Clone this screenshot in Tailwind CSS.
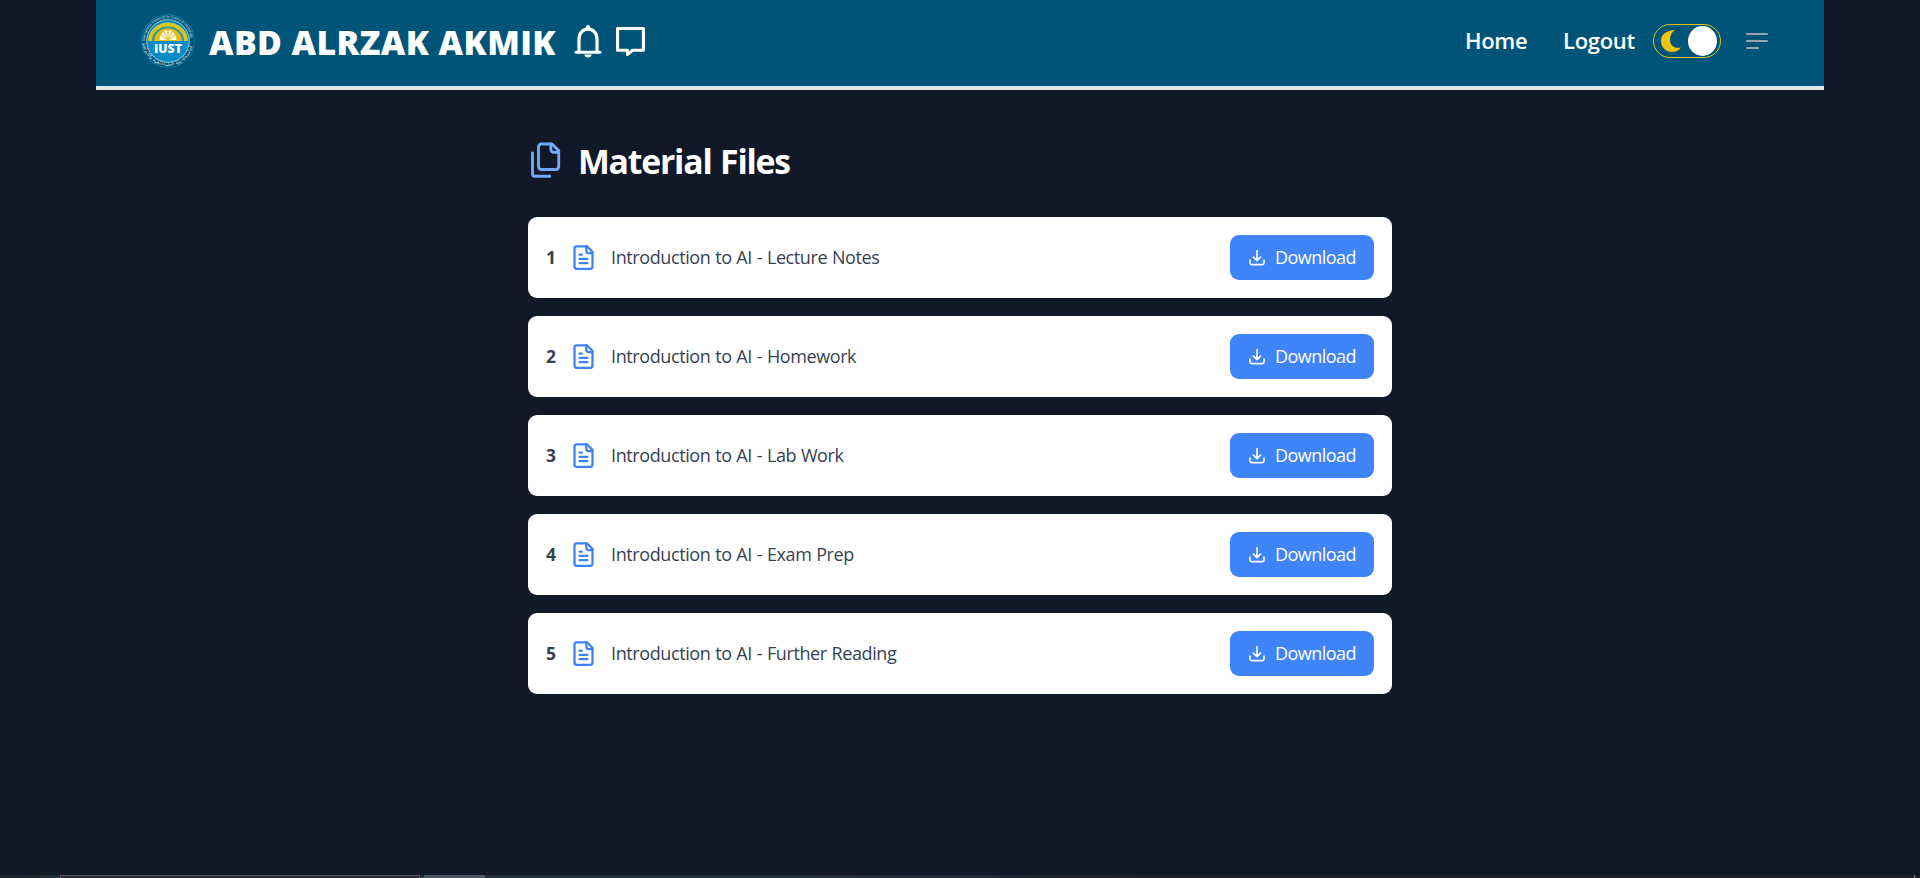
<!DOCTYPE html>
<html lang="en">
<head>
<meta charset="utf-8">
<title>Material Files</title>
<script src="https://cdn.jsdelivr.net/npm/@tailwindcss/browser@4"></script>
</head>
<body class="h-[878px] overflow-hidden bg-[#111827] font-['Open_Sans','Noto_Sans',sans-serif] flex flex-col">
<svg class="hidden">
  <symbol id="doc" viewBox="0 0 24 24" fill="none" stroke="currentColor" stroke-width="2" stroke-linecap="round" stroke-linejoin="round"><path d="M15 2H6a2 2 0 0 0-2 2v16a2 2 0 0 0 2 2h12a2 2 0 0 0 2-2V7Z"/><path d="M14.500 2v4a2 2 0 0 0 2 2h3.500"/><path d="M10.500 9.500H8.500M15.500 13.200H8.500M15.500 17H8.500"/></symbol>
  <symbol id="down" viewBox="0 0 24 24" fill="none" stroke="currentColor" stroke-width="2.400" stroke-linecap="round" stroke-linejoin="round"><path d="M12 1v15M6.500 10.500 12 16l5.500-5.500M1.500 15v4.500a2.500 2.500 0 0 0 2.500 2.500h16a2.500 2.500 0 0 0 2.500-2.500V15"/></symbol>
</svg>
<header class="mx-24 h-[90px] shrink-0 border-b-4 border-[#e5e7eb] bg-[#005478] text-white flex items-center pl-[45px] pr-[56px] pb-1">
  <svg class="w-[54px] h-[54px] shrink-0" viewBox="0 0 54 54">
    <defs>
      <path id="ringTop" d="M4.200 27a22.800 22.800 0 0 1 45.600 0"/>
      <path id="ringBottom" d="M2.200 29a24.900 24.900 0 0 0 49.600 0"/>
    </defs>
    <circle cx="27" cy="27" r="26.400" fill="#005478" stroke="#0878a8" stroke-width="1"/>
    <circle cx="27" cy="27" r="21.300" fill="#0a8bc8" stroke="#b9dbe8" stroke-width=".8"/>
    <path d="M7 27a20 18.500 0 0 1 40 0z" fill="#d9c51c"/>
    <path d="M11 27a16 14.500 0 0 1 32 0z" fill="#2492a8"/>
    <path d="M13 27a14 12.800 0 0 1 28 0z" fill="#e0bd18"/>
    <path d="M18.500 26a8.500 10 0 0 1 17 0z" fill="#fffbe0"/>
    <path d="M27 26V15.500M27 26l-4.500-9M27 26l4.500-9M27 26l-8-5.500M27 26l8-5.500" stroke="#e0bd18" stroke-width="1"/>
    <text class="font-['Open_Sans']" font-size="4.200" font-weight="600" fill="#a9cbd8"><textPath href="#ringTop" textLength="68" lengthAdjust="spacingAndGlyphs">International University for Science &amp; Technology</textPath></text>
    <text class="font-['Noto_Sans']" font-size="4" font-weight="600" fill="#a9cbd8"><textPath href="#ringBottom" textLength="70">الجامعة الدولية الخاصة للعلوم والتكنولوجيا</textPath></text>
    <text x="27" y="39" text-anchor="middle" textLength="28" lengthAdjust="spacingAndGlyphs" class="font-['Open_Sans']" font-size="12.800" font-weight="800" fill="#fff">IUST</text>
  </svg>
  <h1 class="ml-[14px] w-[348px] whitespace-nowrap text-[33.750px] leading-[45px] font-extrabold tracking-[0.430px] pt-[3px]">ABD ALRZAK AKMIK</h1>
  <svg class="ml-[17px] w-[28px] h-[34px]" viewBox="0 0 28 34" fill="none" stroke="#fff"><path d="M2 28.200h24" stroke-width="3" stroke-linecap="round"/><path d="M5 28V15.500C5 9 9 5.200 14 5.200S23 9 23 15.500V28" stroke-width="3.200"/><path d="M14 3.300v1" stroke-width="4.400" stroke-linecap="round"/><path d="M10.500 30.500h7a3.500 3 0 0 1-7 0z" fill="#fff" stroke="none"/></svg>
  <svg class="ml-[14px] w-[29px] h-[29px]" viewBox="0 0 28 28" fill="none" stroke="#fff" stroke-width="3" stroke-linejoin="round"><path d="M1.500 1.500h25v21H16l-5 4v-4H1.500z"/></svg>
  <nav class="ml-auto flex items-center text-[22px] font-semibold leading-[30px]">
    <a class="w-[61px] mr-[37px] pb-[2px] -ml-px whitespace-nowrap tracking-[-0.300px]">Home</a>
    <a class="w-[74px] mr-[16px] pb-[2px] whitespace-nowrap tracking-[-0.300px]">Logout</a>
    <div class="w-[68px] h-[34px] rounded-full border border-[#e2c40c] flex items-center justify-between pl-[7px] pr-[3px]">
      <svg class="w-[20px] h-[22px]" viewBox="0 0 20 22"><path d="M14 0C5 .200 0 4.700 0 11s5 11 11 11c4 0 7.500-2 9-4.500-7 1.500-11-2.500-11-8C9 5 11 2 14 0z" fill="#f1c40f"/></svg>
      <div class="w-[29px] h-[30px] rounded-[50%] bg-white"></div>
    </div>
    <svg class="ml-[25px] w-[22px] h-[18px]" viewBox="0 0 22 18" stroke="#9ca3af" stroke-width="2" stroke-linecap="round"><path d="M1 2h20M1 9h20M1 16h11"/></svg>
  </nav>
</header>
<main class="mx-auto w-[864px] flex-1">
  <h2 class="mt-[48px] h-[45px] flex items-center text-white">
    <svg class="w-[36px] h-[38px] mb-[2px]" viewBox="0 0 24 25.333" fill="none" stroke="#73a9fb" stroke-width="1.900" stroke-linecap="round" stroke-linejoin="round"><path d="M16 2H9a2 2 0 0 0-2 2v13a2 2 0 0 0 2 2h9.500a2 2 0 0 0 2-2V6.500z"/><path d="M15.200 2v3.500a2 2 0 0 0 2 2h3.300"/><path d="M3 8v14a1.500 1.500 0 0 0 1.500 1.500H14.500"/></svg>
    <span class="ml-[14px] whitespace-nowrap text-[33.750px] leading-[45px] font-bold tracking-[-1.200px] [word-spacing:1px] pt-[2px]">Material Files</span>
  </h2>
  <ul class="mt-[34px] flex flex-col gap-[18px] text-[18px] leading-[27px] [word-spacing:0.500px]">
    <li class="h-[81px] rounded-[9px] bg-white px-[18px] flex items-center"><b class="w-[24px] text-[#374151] text-[17.500px] font-bold">1</b><svg class="w-[27px] h-[27px] text-[#3b82f6]"><use href="#doc"/></svg><span class="ml-[14px] text-[#374151] tracking-[-0.400px]">Introduction to AI - Lecture Notes</span><button class="ml-auto w-[144px] h-[45px] rounded-[9px] bg-[#3f84f8] text-white flex items-center pl-[19px]"><svg class="w-[16px] h-[16px]"><use href="#down"/></svg><span class="ml-[10px] tracking-[-0.550px]">Download</span></button></li>
    <li class="h-[81px] rounded-[9px] bg-white px-[18px] flex items-center"><b class="w-[24px] text-[#374151] text-[17.500px] font-bold">2</b><svg class="w-[27px] h-[27px] text-[#3b82f6]"><use href="#doc"/></svg><span class="ml-[14px] text-[#374151] tracking-[-0.400px]">Introduction to AI - Homework</span><button class="ml-auto w-[144px] h-[45px] rounded-[9px] bg-[#3f84f8] text-white flex items-center pl-[19px]"><svg class="w-[16px] h-[16px]"><use href="#down"/></svg><span class="ml-[10px] tracking-[-0.550px]">Download</span></button></li>
    <li class="h-[81px] rounded-[9px] bg-white px-[18px] flex items-center"><b class="w-[24px] text-[#374151] text-[17.500px] font-bold">3</b><svg class="w-[27px] h-[27px] text-[#3b82f6]"><use href="#doc"/></svg><span class="ml-[14px] text-[#374151] tracking-[-0.400px]">Introduction to AI - Lab Work</span><button class="ml-auto w-[144px] h-[45px] rounded-[9px] bg-[#3f84f8] text-white flex items-center pl-[19px]"><svg class="w-[16px] h-[16px]"><use href="#down"/></svg><span class="ml-[10px] tracking-[-0.550px]">Download</span></button></li>
    <li class="h-[81px] rounded-[9px] bg-white px-[18px] flex items-center"><b class="w-[24px] text-[#374151] text-[17.500px] font-bold">4</b><svg class="w-[27px] h-[27px] text-[#3b82f6]"><use href="#doc"/></svg><span class="ml-[14px] text-[#374151] tracking-[-0.400px]">Introduction to AI - Exam Prep</span><button class="ml-auto w-[144px] h-[45px] rounded-[9px] bg-[#3f84f8] text-white flex items-center pl-[19px]"><svg class="w-[16px] h-[16px]"><use href="#down"/></svg><span class="ml-[10px] tracking-[-0.550px]">Download</span></button></li>
    <li class="h-[81px] rounded-[9px] bg-white px-[18px] flex items-center"><b class="w-[24px] text-[#374151] text-[17.500px] font-bold">5</b><svg class="w-[27px] h-[27px] text-[#3b82f6]"><use href="#doc"/></svg><span class="ml-[14px] text-[#374151] tracking-[-0.400px]">Introduction to AI - Further Reading</span><button class="ml-auto w-[144px] h-[45px] rounded-[9px] bg-[#3f84f8] text-white flex items-center pl-[19px]"><svg class="w-[16px] h-[16px]"><use href="#down"/></svg><span class="ml-[10px] tracking-[-0.550px]">Download</span></button></li>
  </ul>
</main>
<footer class="h-[3px] shrink-0 flex bg-[#1f1f20]">
  <div class="w-[60px] bg-linear-to-r from-[#1f2224] to-[#1a2c38]"></div>
  <div class="w-[360px] border border-b-0 border-[#5b5a62] bg-[#2e2b2e]"></div>
  <div class="w-[4px] bg-[#1d2f3a]"></div>
  <div class="w-[61px] bg-[#4d5961]"></div>
  <div class="w-[665px] bg-linear-to-r from-[#22323d] via-[#22323d] to-[#1f1f20]"></div>
  <div class="ml-auto mr-[5px] w-px bg-[#85878a]"></div>
</footer>
</body>
</html>
